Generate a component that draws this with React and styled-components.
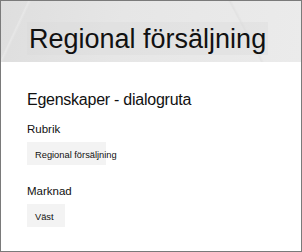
import React from 'react'
import styled, { createGlobalStyle } from 'styled-components'

const Global = createGlobalStyle`
  html, body { margin: 0; padding: 0; background: #fff; }
  body { font-family: "Liberation Sans", Arial, sans-serif; }
`;

const Frame = styled.div`
  width: 302px;
  height: 252px;
  box-sizing: border-box;
  border: 1px solid #7a7a7a;
  overflow: hidden;
  background: #fff;
`;

const Header = styled.header`
  height: 61px;
  padding: 21px 0 0 26px;
  box-sizing: border-box;
  background:
    linear-gradient(115deg, transparent 0 8%, rgba(255,255,255,0.25) 8.5%, transparent 9.3%),
    linear-gradient(62deg, transparent 0 78%, rgba(205,205,205,0.25) 78.5%, transparent 79.3%),
    linear-gradient(100deg, #dedede 0%, #e6e6e6 40%, #ebebeb 100%);
`;

const Title = styled.h1`
  display: inline-block;
  margin: 0;
  padding: 3px 2px 2px 2px;
  background: rgba(215,215,215,0.3);
  font-family: "Liberation Sans", Arial, sans-serif;
  font-weight: normal;
  font-size: 27px;
  line-height: 28px;
  color: #111;
`;

const Body = styled.section`
  padding: 28px 0 0 26px;
`;

const Heading = styled.h2`
  margin: 0 0 13px;
  font-family: "Liberation Sans", Arial, sans-serif;
  font-weight: normal;
  font-size: 16px;
  line-height: 19px;
  letter-spacing: -0.25px;
  color: #111;
`;

const Field = styled.div`
  margin-bottom: 19px;
`;

const Label = styled.div`
  font-size: 11.5px;
  line-height: 14px;
  color: #111;
  margin-bottom: 6px;
`;

const Value = styled.div`
  width: ${p => p.$w}px;
  height: 23px;
  background: #f3f3f3;
  padding: 4px 0 0 8px;
  box-sizing: border-box;
  font-size: 9.3px;
  line-height: 19px;
  color: #111;
  white-space: nowrap;
  overflow: visible;
`;

export default function App() {
  return (
    <>
      <Global />
      <Frame>
        <Header>
          <Title>Regional försäljning</Title>
        </Header>
        <Body>
          <Heading>Egenskaper - dialogruta</Heading>
          <Field>
            <Label>Rubrik</Label>
            <Value $w={79}>Regional försäljning</Value>
          </Field>
          <Field>
            <Label>Marknad</Label>
            <Value $w={38}>Väst</Value>
          </Field>
        </Body>
      </Frame>
    </>
  )
}
